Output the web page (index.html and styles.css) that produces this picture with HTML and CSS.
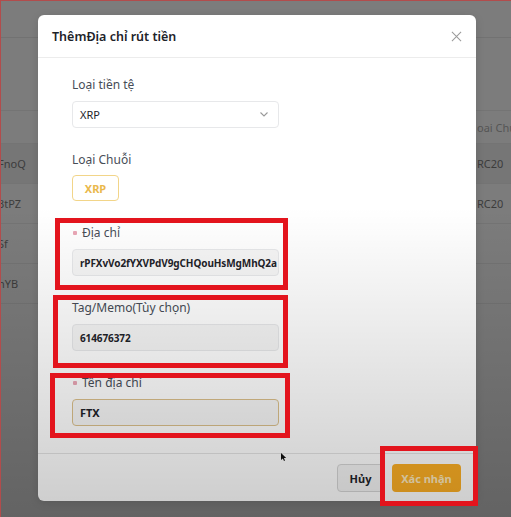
FILE: index.html
```html
<!DOCTYPE html>
<html lang="vi">
<head>
<meta charset="utf-8">
<title>Thêm địa chỉ rút tiền</title>
<link rel="stylesheet" href="styles.css">
</head>
<body>
<div class="page">
  <div class="topbar"></div>
  <div class="gap"></div>
  <div class="trow thead"><span class="c-left"></span><span class="c-right">oai Chuỗi</span></div>
  <div class="trow hl"><span class="c-left">FnoQ</span><span class="c-right">RC20</span></div>
  <div class="trow"><span class="c-left">3tPZ</span><span class="c-right">RC20</span></div>
  <div class="trow"><span class="c-left">Sf</span><span class="c-right"></span></div>
  <div class="trow"><span class="c-left">nYB</span><span class="c-right"></span></div>
</div>

<div class="modal">
  <div class="modal-head">
    <h2>ThêmĐịa chỉ rút tiền</h2>
    <svg class="close" viewBox="0 0 12 12" width="11" height="11"><path d="M1 1 L11 11 M11 1 L1 11" stroke="#9a9a9a" stroke-width="1.1" fill="none"/></svg>
  </div>
  <div class="modal-body">
    <div class="field">
      <div class="label">Loại tiền tệ</div>
      <div class="control select"><span>XRP</span>
        <svg viewBox="0 0 8 5" width="8" height="5"><path d="M0.5 0.5 L4 4 L7.5 0.5" stroke="#9a9a9a" stroke-width="1.1" fill="none"/></svg>
      </div>
    </div>
    <div class="field">
      <div class="label">Loại Chuỗi</div>
      <div class="chip">XRP</div>
    </div>
    <div class="field mark m1">
      <div class="label"><span class="req"></span>Địa chỉ</div>
      <div class="control input">rPFXvVo2fYXVPdV9gCHQouHsMgMhQ2a</div>
    </div>
    <div class="field mark m2">
      <div class="label">Tag/Memo(Tùy chọn)</div>
      <div class="control input">614676372</div>
    </div>
    <div class="field mark m3">
      <div class="label"><span class="req"></span>Tên địa chỉ</div>
      <div class="control input focus">FTX</div>
    </div>
  </div>
  <div class="modal-foot">
    <button class="btn btn-cancel">Hủy</button>
    <button class="btn btn-primary mark m4">Xác nhận</button>
  </div>
</div>

<svg class="cursor" viewBox="0 0 6 9" width="6" height="9"><path d="M0 0 L0 7 L1.8 5.4 L3 8 L4 7.6 L2.9 5 L5.2 5 Z" fill="#111"/></svg>
<div class="vignette"></div>
</body>
</html>
```
FILE: styles.css
```css
* { box-sizing: border-box; margin: 0; padding: 0; }
html, body { width: 511px; height: 517px; overflow: hidden; }
body {
  position: relative;
  background: #7c7c7c;
  font-family: "Noto Sans", "DejaVu Sans", sans-serif;
  color: #333;
}

/* background page */
.topbar { height: 38px; border-bottom: 1px solid #727272; }
.gap { height: 72px; }
.trow {
  height: 40px;
  border-bottom: 1px solid #747474;
  display: flex;
  align-items: center;
  justify-content: space-between;
  font-size: 11px;
  color: #3c3c3c;
}
.thead { height: 34px; border-top: 1px solid #747474; color: #555; }
.hl { background: #767676; }
.c-left { margin-left: -2px; }
.c-right { width: 34px; white-space: nowrap; overflow: hidden; }

/* modal */
.modal {
  position: absolute;
  left: 38px;
  top: 15px;
  width: 438px;
  height: 486px;
  background: #fff;
  border-radius: 6px;
  display: flex;
  flex-direction: column;
  box-shadow: 0 2px 10px rgba(0,0,0,0.12);
}
.modal-head {
  height: 43px;
  border-bottom: 1px solid #ececec;
  display: flex;
  align-items: center;
  justify-content: space-between;
  padding: 0 14px;
}
.modal-head h2 { font-size: 12.5px; font-weight: 600; color: #1e2329; }

.modal-body {
  flex: 1;
  padding: 19px 34px 0;
  display: flex;
  flex-direction: column;
  gap: 24px;
}
.field {
  position: relative;
  width: 207px;
  display: flex;
  flex-direction: column;
  align-items: flex-start;
  gap: 8px;
}
.label {
  font-size: 12px;
  line-height: 16px;
  color: #474d57;
  display: flex;
  align-items: center;
}
.req {
  width: 4px;
  height: 4px;
  background: #eaa7b6;
  border-radius: 1px;
  margin: 0 5px 0 1px;
}
.control {
  width: 100%;
  height: 27px;
  border: 1px solid #e7e8ea;
  border-radius: 4px;
  display: flex;
  align-items: center;
  padding: 0 7px;
  font-size: 11px;
  white-space: nowrap;
  overflow: hidden;
}
.select { justify-content: space-between; background: #fff; color: #1e2329; padding-right: 10px; }
.input {
  background: #f6f6f6;
  font-weight: 700;
  color: #1e2329;
  font-size: 10px;
  letter-spacing: -0.1px;
}
.input.focus { border: 1.5px solid #dbc08b; font-size: 11px; }
.chip {
  width: 47px;
  height: 26px;
  margin-top: -1px;
  border: 1px solid #f2d589;
  border-radius: 4px;
  display: flex;
  align-items: center;
  justify-content: center;
  font-size: 11px;
  font-weight: 700;
  color: #eab84c;
}

.modal-foot {
  height: 48px;
  border-top: 1px solid #e4e4e4;
  display: flex;
  justify-content: flex-end;
  align-items: flex-start;
  gap: 8px;
  padding: 10px 15px 0;
}
.btn {
  height: 28px;
  border-radius: 4px;
  font-family: inherit;
  font-size: 11px;
  font-weight: 700;
}
.btn-cancel { width: 47px; background: #f5f5f5; border: 1px solid #d6d6d6; color: #1e2329; }
.btn-primary { width: 69px; background: #fbae24; border: none; color: #fde9bd; position: relative; }

/* red annotation boxes (drawn over the photo) */
.mark::after {
  content: "";
  position: absolute;
  border: 5px solid #e3141d;
  z-index: 10;
}
.m1::after { left: -17px; top: -7px; right: -9px; bottom: -14px; }
.m2::after { left: -19px; top: -5px; right: -9px; bottom: -17px; }
.m3::after { left: -22px; top: -2px; right: -11px; bottom: -12px; }
.m4::after { left: -12px; top: -18px; right: -17px; bottom: -14px; }

.cursor { position: absolute; left: 281px; top: 453px; }

.vignette {
  position: absolute;
  inset: 0;
  z-index: 5;
  pointer-events: none;
  background: linear-gradient(to bottom, rgba(0,0,0,0) 40%, rgba(0,0,0,0.2) 100%);
  border-top: 1px solid #b24c4c;
  border-left: 1px solid #b24c4c;
}
```
